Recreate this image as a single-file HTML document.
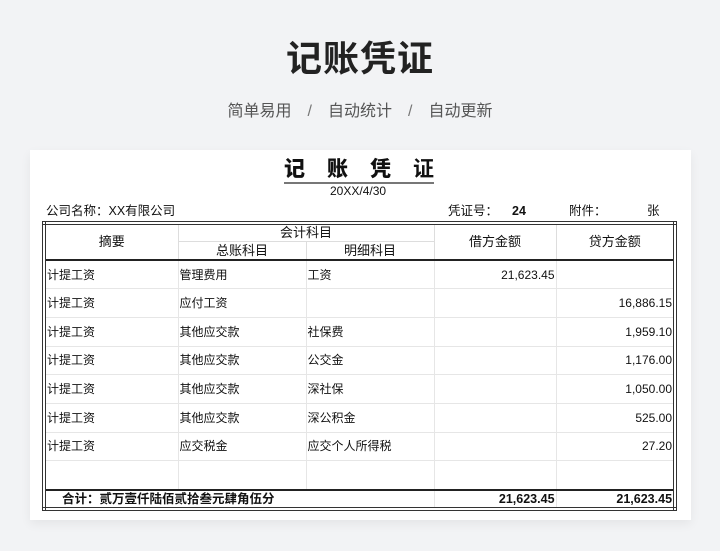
<!DOCTYPE html>
<html><head><meta charset="utf-8"><style>
*{margin:0;padding:0;box-sizing:border-box}
body{width:720px;height:551px;background:#f2f3f5;font-family:"Liberation Sans","Noto Sans CJK SC",sans-serif;position:relative;overflow:hidden;color:#111}
.h1{position:absolute;top:30px;left:0;width:720px;text-align:center;font-size:36px;font-weight:bold;color:#222;letter-spacing:1px}
.sub{position:absolute;top:97px;left:0;width:720px;text-align:center;font-size:16px;color:#555}
.sub span{margin:0 16px;color:#777}
.card{position:absolute;left:30px;top:150px;width:661px;height:370px;background:#fff;box-shadow:0 4px 10px rgba(0,0,0,.06)}
.t{position:absolute;left:284px;top:158px;font-size:21px;font-weight:bold;border-bottom:2px solid #777;line-height:24px;height:26px}
.t b{margin-right:22px}
.date{position:absolute;left:330px;top:184px;font-size:12px}
.info{position:absolute;top:202px;font-size:12.5px;line-height:18px;height:18px}
table{position:absolute;left:42px;top:221px;width:631px;border-collapse:collapse;table-layout:fixed;border:4px double #333;font-size:12px}
td{border:1px solid #e6e6e6;height:28.7px;padding:0 1px;white-space:nowrap;line-height:14px}
.r{text-align:right}
.hd td{text-align:center;font-size:13px;height:18.5px;border-color:#ddd}
.hb td,td.hb{border-bottom:2px solid #222}
tr.tot td{border-top:2px solid #222;font-weight:bold;height:19px;font-size:12.5px}
</style></head><body>
<div class="h1">记账凭证</div>
<div class="sub">简单易用<span>/</span>自动统计<span>/</span>自动更新</div>
<div class="card"></div>
<div class="t"><b>记</b><b>账</b><b>凭</b>证</div>
<div class="date">20XX/4/30</div>
<div class="info" style="left:46px">公司名称：XX有限公司</div>
<div class="info" style="left:448px">凭证号：</div>
<div class="info" style="left:512px;font-weight:bold">24</div>
<div class="info" style="left:569px">附件：</div>
<div class="info" style="left:647px">张</div>
<table>
<colgroup><col style="width:134px"><col style="width:128px"><col style="width:128px"><col style="width:122px"><col style="width:119px"></colgroup>
<tr class="hd"><td rowspan="2" class="hb">摘要</td><td colspan="2">会计科目</td><td rowspan="2" class="hb">借方金额</td><td rowspan="2" class="hb">贷方金额</td></tr>
<tr class="hd hb"><td>总账科目</td><td>明细科目</td></tr>
<tr><td>计提工资</td><td>管理费用</td><td>工资</td><td class="r">21,623.45</td><td></td></tr>
<tr><td>计提工资</td><td>应付工资</td><td></td><td></td><td class="r">16,886.15</td></tr>
<tr><td>计提工资</td><td>其他应交款</td><td>社保费</td><td></td><td class="r">1,959.10</td></tr>
<tr><td>计提工资</td><td>其他应交款</td><td>公交金</td><td></td><td class="r">1,176.00</td></tr>
<tr><td>计提工资</td><td>其他应交款</td><td>深社保</td><td></td><td class="r">1,050.00</td></tr>
<tr><td>计提工资</td><td>其他应交款</td><td>深公积金</td><td></td><td class="r">525.00</td></tr>
<tr><td>计提工资</td><td>应交税金</td><td>应交个人所得税</td><td></td><td class="r">27.20</td></tr>
<tr><td style="height:27px"></td><td></td><td></td><td></td><td></td></tr>
<tr class="tot"><td colspan="3" style="padding-left:16px">合计：贰万壹仟陆佰贰拾叁元肆角伍分</td><td class="r">21,623.45</td><td class="r">21,623.45</td></tr>
</table>
</body></html>
